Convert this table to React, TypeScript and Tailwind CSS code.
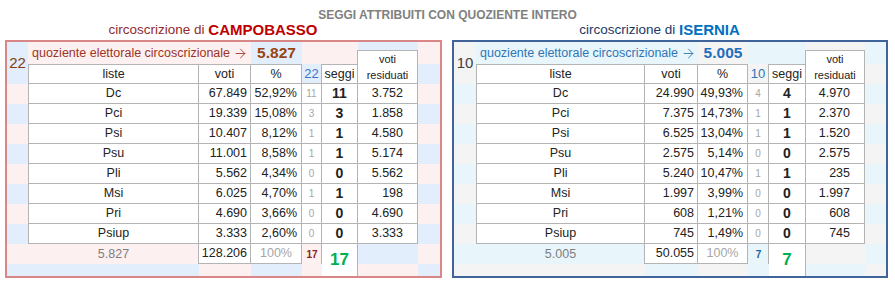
import { ArrowRight } from 'lucide-react';

type Row = { lista: string; voti: string; perc: string; q: number; seggi: number; resti: string };

type Theme = {
  frame: string;
  grid: string;
  c1: string;
  c2: string;
  seats: string;
  quoz: string;
  quozValue: string;
  head: string;
  tot: string;
  circ: string;
  name: string;
};

const campobasso: Row[] = [
  { lista: 'Dc', voti: '67.849', perc: '52,92%', q: 11, seggi: 11, resti: '3.752' },
  { lista: 'Pci', voti: '19.339', perc: '15,08%', q: 3, seggi: 3, resti: '1.858' },
  { lista: 'Psi', voti: '10.407', perc: '8,12%', q: 1, seggi: 1, resti: '4.580' },
  { lista: 'Psu', voti: '11.001', perc: '8,58%', q: 1, seggi: 1, resti: '5.174' },
  { lista: 'Pli', voti: '5.562', perc: '4,34%', q: 0, seggi: 0, resti: '5.562' },
  { lista: 'Msi', voti: '6.025', perc: '4,70%', q: 1, seggi: 1, resti: '198' },
  { lista: 'Pri', voti: '4.690', perc: '3,66%', q: 0, seggi: 0, resti: '4.690' },
  { lista: 'Psiup', voti: '3.333', perc: '2,60%', q: 0, seggi: 0, resti: '3.333' },
];

const isernia: Row[] = [
  { lista: 'Dc', voti: '24.990', perc: '49,93%', q: 4, seggi: 4, resti: '4.970' },
  { lista: 'Pci', voti: '7.375', perc: '14,73%', q: 1, seggi: 1, resti: '2.370' },
  { lista: 'Psi', voti: '6.525', perc: '13,04%', q: 1, seggi: 1, resti: '1.520' },
  { lista: 'Psu', voti: '2.575', perc: '5,14%', q: 0, seggi: 0, resti: '2.575' },
  { lista: 'Pli', voti: '5.240', perc: '10,47%', q: 1, seggi: 1, resti: '235' },
  { lista: 'Msi', voti: '1.997', perc: '3,99%', q: 0, seggi: 0, resti: '1.997' },
  { lista: 'Pri', voti: '608', perc: '1,21%', q: 0, seggi: 0, resti: '608' },
  { lista: 'Psiup', voti: '745', perc: '1,49%', q: 0, seggi: 0, resti: '745' },
];

const red: Theme = {
  frame: 'w-[437px] border-[#d98686]',
  grid: 'grid-cols-[21px_171px_52px_51px_20px_36px_60px_22px]',
  c1: 'bg-[#fcf0f0]',
  c2: 'bg-[#e3eefc]',
  seats: 'text-[#843c0c]',
  quoz: 'text-[#9c3426]',
  quozValue: 'text-[#9a4412]',
  head: 'text-[#3f73c4]',
  tot: 'text-[#8b2020]',
  circ: 'text-[#8f2b2b]',
  name: 'text-[#c00000]',
};

const blue: Theme = {
  frame: 'w-[436px] border-[#40639a]',
  grid: 'grid-cols-[22px_169px_53px_50px_21px_37px_59px_21px]',
  c1: 'bg-[#e8f5fb]',
  c2: 'bg-[#f4f4f4]',
  seats: 'text-[#404040]',
  quoz: 'text-[#2e75b6]',
  quozValue: 'text-[#1f6dbd]',
  head: 'text-[#2e75b6]',
  tot: 'text-[#1f5fa8]',
  circ: 'text-[#203864]',
  name: 'text-[#0070c0]',
};

const line = 'border-[#b4b4b4]';

function Panel({ t, circ, name, rows, quoziente, seats, total, assigned }: {
  t: Theme;
  circ: string;
  name: string;
  rows: Row[];
  quoziente: string;
  seats: number;
  total: string;
  assigned: number;
}) {
  return (
    <div className="flex flex-col">
      {/* circoscrizione title */}
      <div className="h-[18px] flex justify-center items-end pr-[21px] leading-[18px] whitespace-nowrap">
        <span className={`text-[13.5px] ${t.circ}`}>{circ}&nbsp;</span>
        <span className={`text-[15px] font-bold ${t.name}`}>{name}</span>
      </div>

      <div className={`mt-[1px] h-[238px] border-2 grid ${t.frame} ${t.grid} grid-rows-[22px_20px_repeat(8,20px)_20px_12px] text-[12.5px] text-[#222]`}>
        {/* quoziente row */}
        <div className={`row-span-2 flex items-center justify-center text-[15px] ${t.c2} ${t.seats}`}>{seats}</div>
        <div className={`col-span-2 flex items-center pl-[4px] whitespace-nowrap text-[12.5px] ${t.c1} ${t.quoz}`}>
          quoziente elettorale circoscrizionale
          <ArrowRight className="ml-[3px] w-[15px] h-[15px]" strokeWidth={1.4} />
        </div>
        <div className={`flex items-center justify-center font-bold text-[15.5px] ${t.c2} ${t.quozValue}`}>{quoziente}</div>
        <div className={t.c1} />
        <div className={t.c1} />
        <div className="row-span-2 flex flex-col">
          <div className={`h-[8px] ${t.c2}`} />
          <div className={`flex-1 -ml-px bg-white border border-t border-b ${line} flex flex-col items-center justify-center text-[11px] leading-[16px]`}>
            <span>voti</span>
            <span>residuati</span>
          </div>
        </div>
        <div className={t.c1} />

        {/* header row */}
        <div className={`flex items-center justify-center bg-white border ${line}`}>liste</div>
        <div className={`flex items-center justify-center bg-white border-t border-r border-b ${line}`}>voti</div>
        <div className={`flex items-center justify-center bg-white border-t border-r border-b ${line}`}>%</div>
        <div className={`flex items-center justify-center text-[13px] border-r border-b ${line} ${t.c2} ${t.head}`}>{seats}</div>
        <div className={`flex items-center justify-center bg-white border-t border-r border-b ${line}`}>seggi</div>
        <div className={t.c2} />

        {/* liste */}
        {rows.map((r, i) => {
          const band = i % 2 === 0 ? t.c1 : t.c2;
          return [
            <div key={r.lista + '0'} className={band} />,
            <div key={r.lista + '1'} className={`flex items-center justify-center bg-white border-l border-r border-b ${line}`}>{r.lista}</div>,
            <div key={r.lista + '2'} className={`flex items-center justify-end pr-[3px] bg-white border-r border-b ${line}`}>{r.voti}</div>,
            <div key={r.lista + '3'} className={`flex items-center justify-end pr-[4px] bg-white border-r border-b ${line}`}>{r.perc}</div>,
            <div key={r.lista + '4'} className={`flex items-center justify-center text-[10px] text-[#a6a6a6] bg-white border-r border-b ${line}`}>{r.q}</div>,
            <div key={r.lista + '5'} className={`flex items-center justify-center font-bold text-[14px] bg-white border-r border-b ${line}`}>{r.seggi}</div>,
            <div key={r.lista + '6'} className={`flex items-center justify-end pr-[14px] bg-white border-r border-b ${line}`}>{r.resti}</div>,
            <div key={r.lista + '7'} className={band} />,
          ];
        })}

        {/* totali */}
        <div className={t.c1} />
        <div className={`flex items-center justify-center text-[#7f7f7f] ${t.c1}`}>{quoziente}</div>
        <div className={`-ml-px flex items-center justify-end pr-[3px] bg-white border-l border-r border-b ${line}`}>{total}</div>
        <div className={`flex items-center justify-center text-[#a6a6a6] bg-white border-r border-b ${line}`}>100%</div>
        <div className={`flex justify-center pt-[3px] text-[10px] font-bold ${t.c1} ${t.tot}`}>{assigned}</div>
        <div className={`row-span-2 -ml-px flex items-center justify-center bg-white border-l border-r ${line} text-[17px] font-bold text-[#00b050]`}>{assigned}</div>
        <div className={t.c2} />
        <div className={t.c1} />

        <div className={t.c2} />
        <div className={t.c2} />
        <div className={t.c1} />
        <div className={t.c2} />
        <div className={t.c1} />
        <div className={t.c1} />
        <div className={t.c2} />
      </div>
    </div>
  );
}

export default function App() {
  return (
    <div className="w-[895px] h-[286px] bg-white pt-[9px] font-['Liberation_Sans',Arial,sans-serif]">
      <div className="h-[12px] text-center text-[12px] leading-[12px] font-bold text-[#808080]">
        SEGGI ATTRIBUITI CON QUOZIENTE INTERO
      </div>
      <div className="flex gap-[10px] pl-[5px]">
        <Panel t={red} circ="circoscrizione di" name="CAMPOBASSO" rows={campobasso}
          quoziente="5.827" seats={22} total="128.206" assigned={17} />
        <Panel t={blue} circ="circoscrizione di" name="ISERNIA" rows={isernia}
          quoziente="5.005" seats={10} total="50.055" assigned={7} />
      </div>
    </div>
  );
}
